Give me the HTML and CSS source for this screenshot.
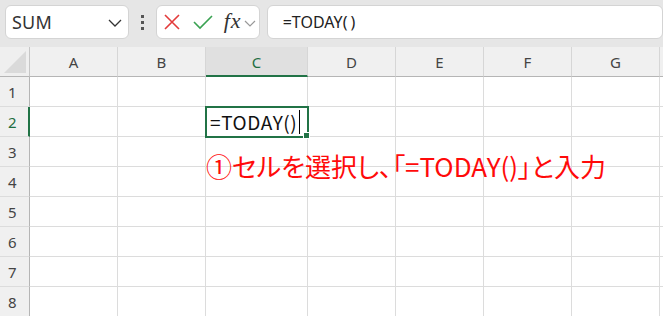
FILE: index.html
```html
<!DOCTYPE html>
<html lang="ja">
<head>
<meta charset="utf-8">
<link rel="stylesheet" href="styles.css">
</head>
<body>
<div class="app">
  <div class="toolbar">
    <div class="namebox">
      <span class="name">SUM</span>
      <svg class="chev" width="14" height="8" viewBox="0 0 14 8"><path d="M1 1 L7 7 L13 1" fill="none" stroke="#333" stroke-width="1.3"/></svg>
    </div>
    <div class="dots"><i></i><i></i><i></i></div>
    <div class="btns">
      <svg width="16" height="16" viewBox="0 0 16 16"><path d="M1 1 L15 15 M15 1 L1 15" stroke="#e33b3b" stroke-width="1.6" fill="none"/></svg>
      <svg width="20" height="16" viewBox="0 0 20 16"><path d="M1 8 L7 14 L19 2" stroke="#3aa252" stroke-width="1.6" fill="none"/></svg>
      <span class="fx">fx</span>
      <svg class="fxchev" width="12" height="7" viewBox="0 0 12 7"><path d="M1 1 L6 6 L11 1" fill="none" stroke="#999" stroke-width="1.2"/></svg>
    </div>
    <div class="formula">=TODAY<span class="par">(</span><span class="par">)</span></div>
  </div>
  <div class="sheet">
    <div class="grid">
      <div class="corner"><span class="tri"></span></div>
      <div class="ch">A</div><div class="ch">B</div><div class="ch sel">C</div><div class="ch">D</div><div class="ch">E</div><div class="ch">F</div><div class="ch">G</div><div class="ch"></div>

      <div class="rh">1</div><div class="c"></div><div class="c"></div><div class="c"></div><div class="c"></div><div class="c"></div><div class="c"></div><div class="c"></div><div class="c"></div>
      <div class="rh rsel">2</div><div class="c"></div><div class="c"></div><div class="c active">=TODAY()<span class="caret"></span></div><div class="c"></div><div class="c"></div><div class="c"></div><div class="c"></div><div class="c"></div>
      <div class="rh">3</div><div class="c"></div><div class="c"></div><div class="c"></div><div class="c"></div><div class="c"></div><div class="c"></div><div class="c"></div><div class="c"></div>
      <div class="rh">4</div><div class="c"></div><div class="c"></div><div class="c"></div><div class="c"></div><div class="c"></div><div class="c"></div><div class="c"></div><div class="c"></div>
      <div class="rh">5</div><div class="c"></div><div class="c"></div><div class="c"></div><div class="c"></div><div class="c"></div><div class="c"></div><div class="c"></div><div class="c"></div>
      <div class="rh">6</div><div class="c"></div><div class="c"></div><div class="c"></div><div class="c"></div><div class="c"></div><div class="c"></div><div class="c"></div><div class="c"></div>
      <div class="rh">7</div><div class="c"></div><div class="c"></div><div class="c"></div><div class="c"></div><div class="c"></div><div class="c"></div><div class="c"></div><div class="c"></div>
      <div class="rh">8</div><div class="c"></div><div class="c"></div><div class="c"></div><div class="c"></div><div class="c"></div><div class="c"></div><div class="c"></div><div class="c"></div>
    </div>
    <div class="note">①セルを選択し、「=TODAY()」と入力</div>
  </div>
</div>
</body>
</html>
```

FILE: styles.css
```css
html, body {
  margin: 0;
  padding: 0;
  background: #fff;
  overflow: hidden;
}
body {
  width: 663px;
  height: 316px;
  font-family: "Noto Sans", "Noto Sans CJK JP", sans-serif;
}
.app {
  width: 663px;
  height: 316px;
  overflow: hidden;
}
.toolbar {
  height: 47px;
  background: #e6e6e6;
  box-sizing: border-box;
  padding: 5px 0 0 5px;
  display: flex;
  align-items: flex-start;
}
.namebox {
  width: 125px;
  height: 34px;
  box-sizing: border-box;
  background: #fff;
  border: 1px solid #d4d4d4;
  border-radius: 6px;
  display: flex;
  align-items: center;
  justify-content: space-between;
  padding: 0 6px 0 6px;
}
.name {
  font-family: "Noto Sans", sans-serif;
  font-size: 18px;
  color: #333;
  letter-spacing: 0.2px;
}
.chev { margin-top: 1px; }
.dots {
  width: 27px;
  height: 34px;
  display: flex;
  flex-direction: column;
  align-items: center;
  justify-content: center;
  gap: 3px;
}
.dots i {
  display: block;
  width: 3px;
  height: 3px;
  background: #555;
}
.btns {
  width: 105px;
  height: 34px;
  box-sizing: border-box;
  background: #fff;
  border: 1px solid #d4d4d4;
  border-radius: 6px;
  display: flex;
  align-items: center;
  padding-left: 7px;
}
.btns svg:nth-child(1) { margin-right: 13px; }
.btns svg:nth-child(2) { margin-right: 11px; }
.fx {
  font-family: "Liberation Serif", "DejaVu Serif", serif;
  font-style: italic;
  font-size: 22px;
  color: #333;
  letter-spacing: 1px;
  margin-right: 2px;
  margin-top: -2px;
}
.fxchev { margin-top: 2px; }
.formula {
  margin-left: 7px;
  width: 400px;
  height: 34px;
  box-sizing: border-box;
  background: #fff;
  border: 1px solid #d4d4d4;
  border-radius: 6px;
  font-family: "Noto Sans", sans-serif;
  font-size: 16px;
  color: #222;
  padding-left: 15px;
  line-height: 32px;
}
.par { margin-right: 3px; }
.sheet {
  position: relative;
}
.grid {
  display: grid;
  grid-template-columns: 30px 88px 88px 102px 88px 88px 88px 88px 40px;
  grid-template-rows: 30px repeat(8, 30px);
}
.corner {
  background: #efefef;
  border-right: 1px solid #c6c6c6;
  border-bottom: 1px solid #b5b5b5;
  position: relative;
}
.tri {
  position: absolute;
  right: 3px;
  bottom: 3px;
  width: 0;
  height: 0;
  border-left: 22px solid transparent;
  border-bottom: 22px solid #dadada;
}
.ch {
  background: #f0f0f0;
  border-right: 1px solid #d6d6d6;
  border-bottom: 1px solid #b5b5b5;
  display: flex;
  align-items: center;
  justify-content: center;
  font-size: 15px;
  color: #444;
  padding-top: 1px;
}
.ch.sel {
  background: #e0e0e0;
  color: #1e6e42;
  border-bottom: 2px solid #217346;
}
.rh {
  background: #f0f0f0;
  border-right: 1px solid #b5b5b5;
  border-bottom: 1px solid #dcdcdc;
  font-size: 15px;
  color: #444;
  display: flex;
  align-items: center;
  padding-left: 8px;
  padding-top: 1px;
}
.rh.rsel {
  color: #1e6e42;
  border-right: 2px solid #217346;
}
.c {
  border-right: 1px solid #dcdcdc;
  border-bottom: 1px solid #dcdcdc;
}
.ch, .rh, .c, .corner { box-sizing: border-box; }
.c.active {
  position: relative;
  outline: 2px solid #217346;
  outline-offset: -1px;
  font-family: "Noto Sans CJK JP", sans-serif;
  font-size: 19px;
  letter-spacing: 0.6px;
  color: #111;
  padding-left: 4px;
  line-height: 30px;
  display: flex;
  align-items: center;
  z-index: 2;
}
.caret {
  display: inline-block;
  width: 1px;
  height: 24px;
  background: #000;
  margin-left: 2px;
}
.c.active::after {
  content: "";
  position: absolute;
  right: -3px;
  bottom: -3px;
  width: 5px;
  height: 5px;
  background: #217346;
  border: 1px solid #fff;
}
.note {
  position: absolute;
  left: 206px;
  top: 103px;
  font-family: "Noto Sans CJK JP", sans-serif;
  font-feature-settings: "palt";
  font-size: 26px;
  font-weight: 400;
  color: #ff0a0a;
  white-space: nowrap;
  line-height: 32px;
}
```
